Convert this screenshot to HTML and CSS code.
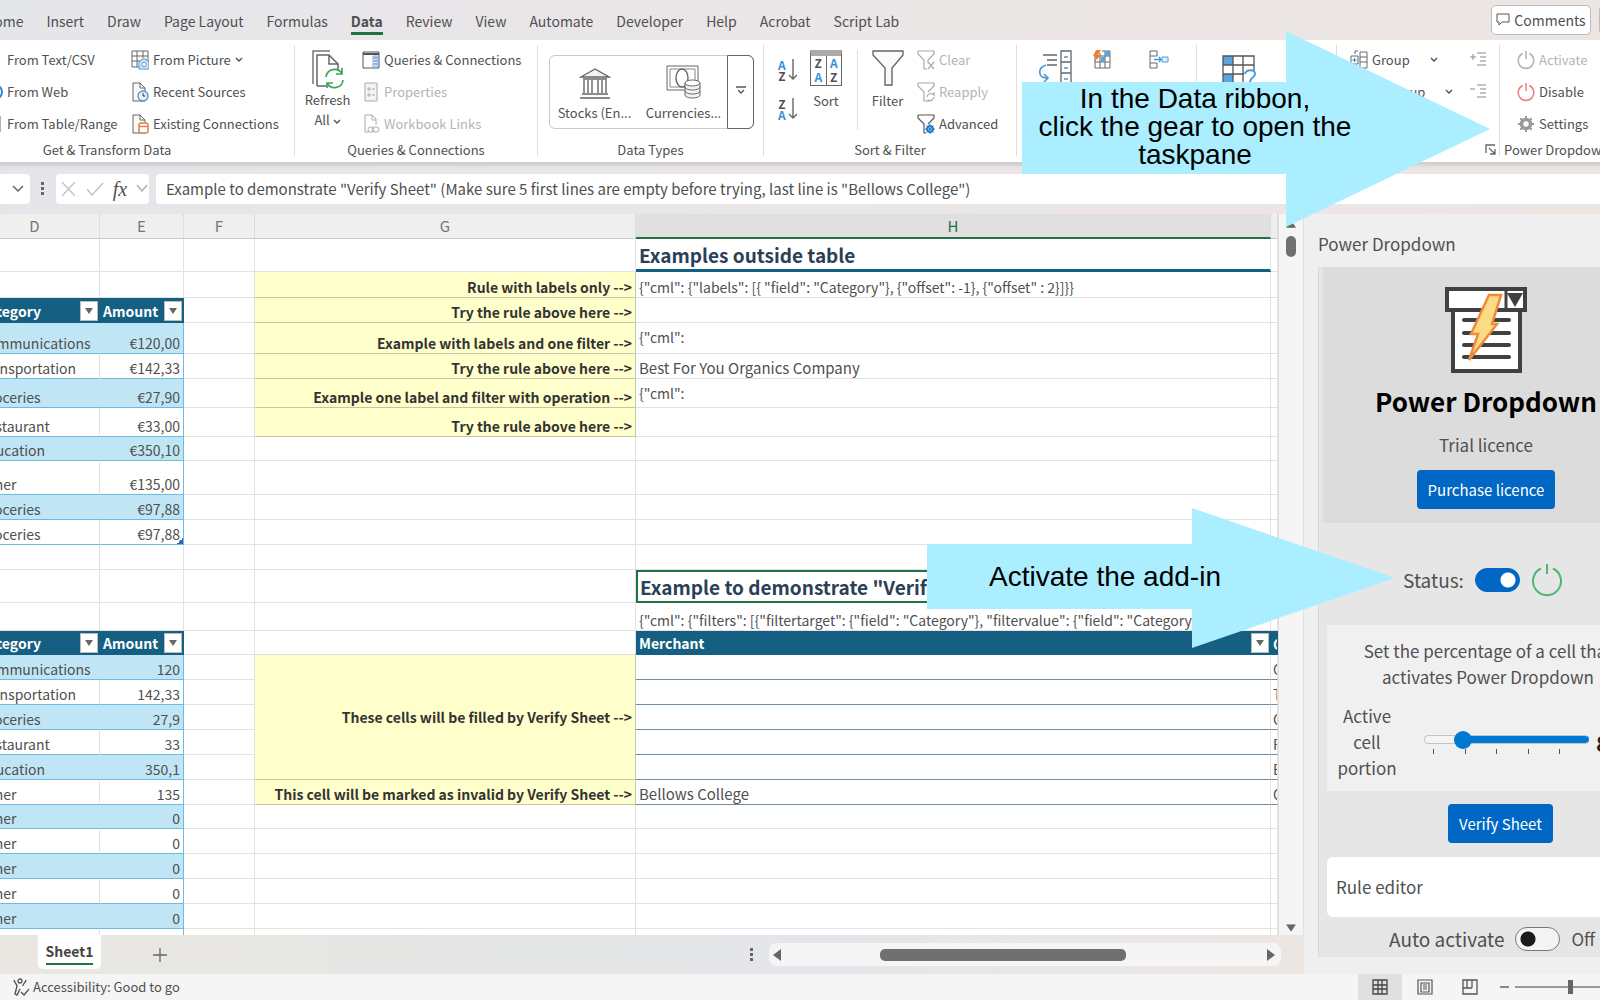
FILE: index.html
```html
<!DOCTYPE html>
<html lang="en">
<head>
<meta charset="utf-8">
<title>Power Dropdown – Workbook</title>
<link rel="stylesheet" href="styles.css">
</head>
<body>
<svg class="defs" aria-hidden="true">
  <symbol id="doc" viewBox="0 0 18 20"><path d="M2 1h7l5 5v13H2z" fill="#fafafa" stroke="#666"/><path d="M9 1v5h5" fill="none" stroke="#666"/></symbol>
  <symbol id="chev" viewBox="0 0 8 6"><path d="M1 1l3 3 3-3" fill="none" stroke="currentColor" stroke-width="1.4"/></symbol>
  <symbol id="funnel" viewBox="0 0 32 36"><path d="M1 1h30v4L20 18v17h-7V18L1 5z" fill="#fafafa" stroke="#666" stroke-width="1.4"/></symbol>
  <symbol id="power" viewBox="0 0 16 18"><path d="M5 3.2a7 7 0 1 0 6 0M8 1v7" fill="none" stroke="currentColor" stroke-width="1.4"/></symbol>
  <symbol id="tri" viewBox="0 0 8 6"><path d="M0 0h8L4 6z" fill="#666"/></symbol>
</svg>

<header class="tabs">
  <nav class="tablist">
    <a href="#">Home</a><a href="#">Insert</a><a href="#">Draw</a><a href="#">Page Layout</a><a href="#">Formulas</a><a href="#" class="current">Data</a><a href="#">Review</a><a href="#">View</a><a href="#">Automate</a><a href="#">Developer</a><a href="#">Help</a><a href="#">Acrobat</a><a href="#">Script Lab</a>
  </nav>
  <button class="comments"><svg width="14" height="14" viewBox="0 0 14 14"><path d="M1 1h12v8H6l-3 3V9H1z" fill="none" stroke="#555"/></svg>Comments</button>
  <button class="share" aria-label="Share"></button>
</header>

<section class="ribbon">
  <div class="group g-get">
    <div class="tools">
      <div class="stack clipped">
        <button><svg class="ic"><use href="#doc"/></svg>From Text/CSV</button>
        <button><svg class="ic" viewBox="0 0 18 20"><circle cx="10" cy="10" r="7" fill="#fff" stroke="#2b88d8" stroke-width="2"/></svg>From Web</button>
        <button><svg class="ic" viewBox="0 0 18 20"><path d="M2 2h13v16H2zM2 7h13M8 2v16" fill="none" stroke="#666"/></svg>From Table/Range</button>
      </div>
      <div class="stack">
        <button><svg class="ic" viewBox="0 0 18 20"><path d="M1 1h16v16H1zM1 6h16M1 11h8M6 1v16M12 1v7" fill="none" stroke="#666"/><path d="M8 11h2l1-2h4l1 2h2v8H8z" fill="#cfe6f8" stroke="#4a9bdc"/><circle cx="13" cy="14.500" r="2.200" fill="#fff" stroke="#4a9bdc"/></svg>From Picture<svg class="chev"><use href="#chev"/></svg></button>
        <button><svg class="ic" viewBox="0 0 18 20"><use href="#doc" width="18" height="20"/><circle cx="12" cy="14" r="5" fill="#eaf4fc" stroke="#4a9bdc" stroke-width="1.400"/><path d="M12 11v3h2.500" fill="none" stroke="#333"/></svg>Recent Sources</button>
        <button><svg class="ic" viewBox="0 0 18 20"><use href="#doc" width="18" height="20"/><rect x="8" y="9" width="9" height="10" rx="2" fill="#fff" stroke="#e08050" stroke-width="1.500"/><path d="M8 12.500h9" stroke="#e08050" stroke-width="1.500"/></svg>Existing Connections</button>
      </div>
    </div>
    <div class="glabel">Get &amp; Transform Data</div>
  </div>

  <div class="group g-query">
    <div class="tools">
      <button class="big"><svg width="32" height="40" viewBox="0 0 32 40"><path d="M1 34V1h17" fill="none" stroke="#777" stroke-width="1.500"/><path d="M5 36V5h12l9 9v6M17 5v9h9M5 36h9" fill="none" stroke="#666" stroke-width="1.500"/><path d="M14 27a8.500 8.500 0 0 1 16-3M30 18v6h-6M31 30a8.500 8.500 0 0 1-16 3M15 38v-5h6" fill="none" stroke="#3fa45b" stroke-width="1.700"/></svg><span>Refresh</span><span>All <svg class="chev"><use href="#chev"/></svg></span></button>
      <div class="stack">
        <button><svg class="ic" viewBox="0 0 18 20"><path d="M1 2h16v16H1z" fill="#fff" stroke="#555"/><path d="M1 4h16" stroke="#555" stroke-width="2"/><path d="M11 6h5v11h-5z" fill="#dbe9fb" stroke="#7aa5e0"/><path d="M12 8h3M12 11h3M12 14h3" stroke="#4472c4"/></svg>Queries &amp; Connections</button>
        <button disabled><svg class="ic" viewBox="0 0 18 20"><path d="M3 1h12v18H3z" fill="#f4f4f4" stroke="#aaa"/><path d="M6 6h2v2H6zM6 12h2v2H6zM10 7h3M10 13h3" fill="none" stroke="#aaa"/></svg>Properties</button>
        <button disabled><svg class="ic" viewBox="0 0 18 20"><path d="M3 18V1h7l4 4v6M10 1v5h4M3 18h4" fill="none" stroke="#aaa"/><rect x="6" y="13" width="6" height="5" rx="2.500" fill="none" stroke="#aaa"/><rect x="10" y="13" width="7" height="5" rx="2.500" fill="none" stroke="#aaa"/></svg>Workbook Links</button>
      </div>
    </div>
    <div class="glabel">Queries &amp; Connections</div>
  </div>

  <div class="group g-types">
    <div class="gallery">
      <button><svg width="32" height="32" viewBox="0 0 32 32"><path d="M2 10L16 2l14 8zM4 12h24M5 13v13M9 13v13M13 13v13M19 13v13M23 13v13M27 13v13M3 27h26M1 31h30" fill="#f4f4f4" stroke="#666" stroke-width="1.400"/></svg>Stocks (En...</button>
      <button><svg width="36" height="34" viewBox="0 0 36 34"><path d="M1 1h31v24H1z" fill="#fff" stroke="#666"/><path d="M4 4h25v18H4z" fill="none" stroke="#888"/><ellipse cx="16" cy="13" rx="6" ry="9" fill="#fff" stroke="#666" stroke-width="1.400"/><path d="M19 18v12c0 4 15 4 15 0V18" fill="#f4f4f4" stroke="#666"/><ellipse cx="26.500" cy="18" rx="7.500" ry="3" fill="#fff" stroke="#666"/><path d="M19 22c0 4 15 4 15 0M19 26c0 4 15 4 15 0" fill="none" stroke="#666"/></svg>Currencies...</button>
      <button class="more" aria-label="More"><svg width="10" height="8" viewBox="0 0 10 8"><path d="M0 1h10M2 4l3 3 3-3" fill="none" stroke="#555" stroke-width="1.300"/></svg></button>
    </div>
    <div class="glabel">Data Types</div>
  </div>

  <div class="group g-sort">
    <div class="tools">
      <div class="az">
        <button aria-label="Sort A to Z"><b>A<br><i>Z</i></b><svg width="9" height="22" viewBox="0 0 9 22"><path d="M5 0v19M1 16l4 4 4-4" fill="none" stroke="#666" stroke-width="1.400"/></svg></button>
        <button aria-label="Sort Z to A"><b><i>Z</i><br>A</b><svg width="9" height="22" viewBox="0 0 9 22"><path d="M5 0v19M1 16l4 4 4-4" fill="none" stroke="#666" stroke-width="1.400"/></svg></button>
      </div>
      <button class="big sort"><span class="sortbox"><b><i>Z</i><br>A</b><b>A<br><i>Z</i></b></span><span>Sort</span></button>
      <button class="big filter-big"><svg width="32" height="36"><use href="#funnel"/></svg><span>Filter</span></button>
      <div class="stack">
        <button disabled><svg class="ic" viewBox="0 0 18 20"><path d="M1 1h16v3l-6 6v3M1 1v3l6 6v9h3M11 12l6 7M17 12l-6 7" fill="none" stroke="#aaa" stroke-width="1.200"/></svg>Clear</button>
        <button disabled><svg class="ic" viewBox="0 0 18 20"><path d="M1 1h16v3l-6 6M1 1v3l6 6v9h3M10 15a4 4 0 0 1 7-2v-3M17 15a4 4 0 0 1-6 3v2" fill="none" stroke="#aaa" stroke-width="1.200"/></svg>Reapply</button>
        <button><svg class="ic" viewBox="0 0 18 20"><path d="M1 1h16v3l-6 6M1 1v3l6 6v9h2" fill="none" stroke="#555" stroke-width="1.200"/><circle cx="13" cy="15" r="3" fill="none" stroke="#2b7cd3" stroke-width="2"/><path d="M13 10v10M8 15h10M9.500 11.500l7 7M16.500 11.500l-7 7" stroke="#2b7cd3"/></svg>Advanced</button>
      </div>
    </div>
    <div class="glabel">Sort &amp; Filter</div>
  </div>

  <div class="group g-tools">
    <div class="tools">
      <button aria-label="Text to Columns"><svg width="36" height="36" viewBox="0 0 36 36"><path d="M6 5h14M10 10h10M10 15h10" stroke="#666" stroke-width="1.600"/><path d="M9 15c-9 3-8 13 1 13M7 24l4 4-4 4" fill="none" stroke="#4a9bdc" stroke-width="1.700"/><path d="M24 1h10v34H24zM24 12h10M24 23h10" fill="#fff" stroke="#666" stroke-width="1.300"/><path d="M27 7h4M27 18h4M27 29h4" stroke="#4a9bdc" stroke-width="1.500"/></svg></button>
      <button aria-label="Flash Fill"><svg width="20" height="20" viewBox="0 0 20 20"><path d="M3 6h15v12H3zM3 12h15M8 3v15M13 1v17M10 1h8v5" fill="#fff" stroke="#666"/><path d="M9 7h4v5H9zM13 1h5v5h-5z" fill="#5aa5e0"/><path d="M4 0h5L6 5h3L2 12l2-6H1z" fill="#ed7d31"/></svg></button>
      <button aria-label="Consolidate"><svg width="20" height="20" viewBox="0 0 20 20"><path d="M1 1h7v5H1zM1 13h7v5H1zM1 6v7" fill="#fff" stroke="#666"/><path d="M5 9.500h7M10 7l2 2.500L10 12" fill="none" stroke="#4a9bdc" stroke-width="1.400"/><path d="M13 7h6v5h-6z" fill="#e4f0fa" stroke="#4a9bdc"/></svg></button>
    </div>
  </div>

  <div class="group g-what">
    <div class="tools">
      <button aria-label="What-If Analysis"><svg width="34" height="32" viewBox="0 0 34 32"><path d="M1 1h31v27H1z" fill="#fff"/><path d="M1 1h10v9H1zM1 19h10v9H1z" fill="#5aa5e0"/><path d="M1 1h31v27H1zM1 10h31M1 19h31M11 1v27M21 1v27" fill="none" stroke="#555" stroke-width="1.300"/><path d="M22 16h12v16H22z" fill="#fff"/><path d="M23 19c1-5 10-5 10 0 0 4-5 3-5 8" fill="none" stroke="#4a9bdc" stroke-width="2"/></svg></button>
    </div>
  </div>

  <div class="group g-outline">
    <div class="tools">
      <div class="stack">
        <button><svg class="ic" viewBox="0 0 18 20"><path d="M10 2h7v16h-7zM10 7h7M10 12h7" fill="#fff" stroke="#666"/><path d="M8 1H5v3M1 6h7v8H1z" fill="none" stroke="#666"/><path d="M2.500 10h4M4.500 8v4" stroke="#2b7cd3"/></svg>Group<svg class="chev far"><use href="#chev"/></svg></button>
        <button><svg class="ic" viewBox="0 0 18 20"><path d="M10 2h7v16h-7z" fill="#fff" stroke="#666"/></svg>Ungroup<svg class="chev far"><use href="#chev"/></svg></button>
      </div>
      <div class="stack detail">
        <button aria-label="Show Detail" disabled><svg class="ic" viewBox="0 0 18 20"><path d="M1 7h6M4 4v6M8 3h9M11 7h6M11 11h6M8 15h9" stroke="#888"/></svg></button>
        <button aria-label="Hide Detail" disabled><svg class="ic" viewBox="0 0 18 20"><path d="M1 7h5M8 3h9M11 7h6M11 11h6M8 15h9" stroke="#888"/></svg></button>
      </div>
    </div>
    <button class="launcher" aria-label="Outline settings"><svg width="12" height="12" viewBox="0 0 12 12"><path d="M1 9V1h9M4 4l6 6M10 5v5H5" fill="none" stroke="#666" stroke-width="1.300"/></svg></button>
  </div>

  <div class="group g-power">
    <div class="tools">
      <div class="stack">
        <button disabled><svg class="ic"><use href="#power"/></svg>Activate</button>
        <button><svg class="ic red"><use href="#power"/></svg>Disable</button>
        <button><svg class="ic" viewBox="0 0 18 18"><circle cx="9" cy="9" r="4.500" fill="none" stroke="#999" stroke-width="3.500"/><path d="M9 1v3M9 14v3M1 9h3M14 9h3M3.300 3.300l2 2M12.700 12.700l2 2M3.300 14.700l2-2M12.700 5.300l2-2" stroke="#999" stroke-width="2"/></svg>Settings</button>
      </div>
    </div>
    <div class="glabel">Power Dropdown</div>
  </div>
</section>

<section class="formula-bar">
  <button class="namebox" aria-label="Name box"><svg width="14" height="10" viewBox="0 0 14 10"><path d="M2 2l5 5 5-5" fill="none" stroke="#666" stroke-width="1.500"/></svg></button>
  <svg class="grip" width="4" height="14" viewBox="0 0 4 14"><path d="M0 0h3v3H0zM0 5h3v3H0zM0 10h3v3H0z" fill="#666"/></svg>
  <div class="fx">
    <svg width="16" height="16" viewBox="0 0 16 16"><path d="M1 1l13 14M14 1L1 15" stroke="#c4c4c4" stroke-width="1.300"/></svg>
    <svg width="18" height="14" viewBox="0 0 18 14"><path d="M1 7l5 6L17 1" fill="none" stroke="#c4c4c4" stroke-width="1.500"/></svg>
    <i>fx</i>
    <svg width="12" height="9" viewBox="0 0 12 9"><path d="M1 1l5 6 5-6" fill="none" stroke="#aaa" stroke-width="1.300"/></svg>
  </div>
  <input class="formula" aria-label="Formula" value="Example to demonstrate &quot;Verify Sheet&quot; (Make sure 5 first lines are empty before trying, last line is &quot;Bellows College&quot;)">
</section>

<main>
  <div class="book">
    <div class="viewport">
      <div class="sheet">
        <table>
          <colgroup><col class="cd"><col class="ce"><col class="cf"><col class="cg"><col><col class="ci"></colgroup>
          <thead><tr><th>D</th><th>E</th><th>F</th><th>G</th><th class="sel">H</th><th></th></tr></thead>
          <tbody>
            <tr class="r33"><td></td><td></td><td></td><td></td><td class="title ruled">Examples outside table</td><td></td></tr>
            <tr class="r26"><td></td><td></td><td></td><td class="note">Rule with labels only --&gt;</td><td>{"cml": {"labels": [{ "field": "Category"}, {"offset": -1}, {"offset" : 2}]}}</td><td></td></tr>
            <tr class="r25"><td class="h"><div>Category<button aria-label="Filter"><svg width="8" height="6"><use href="#tri"/></svg></button></div></td><td class="h last"><div>Amount<button aria-label="Filter"><svg width="8" height="6"><use href="#tri"/></svg></button></div></td><td></td><td class="note">Try the rule above here --&gt;</td><td></td><td></td></tr>
            <tr class="r31"><td class="t s">Communications</td><td class="t s n">€120,00</td><td></td><td class="note">Example with labels and one filter --&gt;</td><td class="top">{"cml":</td><td></td></tr>
            <tr class="r25"><td class="t">Transportation</td><td class="t n">€142,33</td><td></td><td class="note">Try the rule above here --&gt;</td><td class="company">Best For You Organics Company</td><td></td></tr>
            <tr class="r29"><td class="t s">Groceries</td><td class="t s n">€27,90</td><td></td><td class="note">Example one label and filter with operation --&gt;</td><td class="top">{"cml":</td><td></td></tr>
            <tr class="r29"><td class="t">Restaurant</td><td class="t n">€33,00</td><td></td><td class="note">Try the rule above here --&gt;</td><td></td><td></td></tr>
            <tr class="r24"><td class="t s">Education</td><td class="t s n">€350,10</td><td></td><td></td><td></td><td></td></tr>
            <tr class="r34"><td class="t">Other</td><td class="t n">€135,00</td><td></td><td></td><td></td><td></td></tr>
            <tr class="r25"><td class="t s">Groceries</td><td class="t s n">€97,88</td><td></td><td></td><td></td><td></td></tr>
            <tr class="r25"><td class="t">Groceries</td><td class="t n corner">€97,88</td><td></td><td></td><td></td><td></td></tr>
            <tr class="r25"><td></td><td></td><td></td><td></td><td></td><td></td></tr>
            <tr class="r33"><td></td><td></td><td></td><td></td><td class="title active">Example to demonstrate "Verify Sheet"</td><td></td></tr>
            <tr class="r28"><td></td><td></td><td></td><td></td><td>{"cml": {"filters": [{"filtertarget": {"field": "Category"}, "filtervalue": {"field": "Category2"}}]}}</td><td></td></tr>
            <tr class="r24"><td class="h"><div>Category<button aria-label="Filter"><svg width="8" height="6"><use href="#tri"/></svg></button></div></td><td class="h last"><div>Amount<button aria-label="Filter"><svg width="8" height="6"><use href="#tri"/></svg></button></div></td><td></td><td></td><td class="h"><div>Merchant<button aria-label="Filter"><svg width="8" height="6"><use href="#tri"/></svg></button></div></td><td class="h">Category</td></tr>
            <tr class="r25"><td class="t s">Communications</td><td class="t s n">120</td><td></td><td class="note mid" rowspan="5">These cells will be filled by Verify Sheet --&gt;</td><td class="m"></td><td class="m">Communications</td></tr>
            <tr class="r25"><td class="t">Transportation</td><td class="t n">142,33</td><td></td><td class="m"></td><td class="m">Transportation</td></tr>
            <tr class="r25"><td class="t s">Groceries</td><td class="t s n">27,9</td><td></td><td class="m"></td><td class="m">Groceries</td></tr>
            <tr class="r25"><td class="t">Restaurant</td><td class="t n">33</td><td></td><td class="m"></td><td class="m">Restaurant</td></tr>
            <tr class="r25"><td class="t s">Education</td><td class="t s n">350,1</td><td></td><td class="m"></td><td class="m">Education</td></tr>
            <tr class="r25"><td class="t">Other</td><td class="t n">135</td><td></td><td class="note">This cell will be marked as invalid by Verify Sheet --&gt;</td><td class="m company">Bellows College</td><td class="m">Other</td></tr>
            <tr class="r24"><td class="t s">Other</td><td class="t s n">0</td><td></td><td></td><td></td><td></td></tr>
            <tr class="r25"><td class="t">Other</td><td class="t n">0</td><td></td><td></td><td></td><td></td></tr>
            <tr class="r25"><td class="t s">Other</td><td class="t s n">0</td><td></td><td></td><td></td><td></td></tr>
            <tr class="r25"><td class="t">Other</td><td class="t n">0</td><td></td><td></td><td></td><td></td></tr>
            <tr class="r25"><td class="t s">Other</td><td class="t s n">0</td><td></td><td></td><td></td><td></td></tr>
            <tr class="r25"><td class="t"></td><td class="t n"></td><td></td><td></td><td></td><td></td></tr>
          </tbody>
        </table>
      </div>
      <div class="vscroll"><svg width="10" height="8"><use href="#tri" transform="rotate(180 5 4)"/></svg><span class="vthumb"></span><svg width="10" height="9" viewBox="0 0 8 7"><use href="#tri" width="8" height="6"/></svg></div>
    </div>
    <footer class="sheetbar">
      <button class="sheettab"><span>Sheet1</span></button>
      <button class="add" aria-label="New sheet"><svg width="14" height="14" viewBox="0 0 14 14"><path d="M7 0v14M0 7h14" stroke="#666" stroke-width="1.300"/></svg></button>
      <svg class="dots" width="3" height="14" viewBox="0 0 3 14"><path d="M0 0h3v3H0zM0 5h3v3H0zM0 10h3v3H0z" fill="#666"/></svg>
      <div class="hscroll"><svg width="8" height="12" viewBox="0 0 8 12"><path d="M8 0v12L0 6z" fill="#666"/></svg><span class="hthumb"></span><svg width="8" height="12" viewBox="0 0 8 12"><path d="M0 0v12l8-6z" fill="#666"/></svg></div>
    </footer>
  </div>

  <aside class="pane">
    <h2>Power Dropdown</h2>
    <div class="frame">
      <section class="hero">
        <svg width="82" height="86" viewBox="0 0 82 86"><path d="M8 23h67v61H8z" fill="#fff" stroke="#404040" stroke-width="4"/><path d="M2 2h78v21H2z" fill="#fff" stroke="#404040" stroke-width="4"/><path d="M61 2v21" stroke="#404040" stroke-width="3"/><path d="M62 6h16L70 20z" fill="#404040"/><path d="M19 33h45M19 46h45M19 58h45M19 70h45" stroke="#404040" stroke-width="4" stroke-linecap="round"/><path d="M44 8h12l-9 29h5L24 73l9-26h-7z" fill="#fbdc84" stroke="#ed8b3b" stroke-width="2.500"/></svg>
        <h1>Power Dropdown</h1>
        <p>Trial licence</p>
        <button class="primary">Purchase licence</button>
      </section>
      <div class="status"><label for="status">Status:</label><input type="checkbox" role="switch" id="status" class="switch" checked><svg width="32" height="34" viewBox="0 0 32 34"><path d="M10 5.500a14 14 0 1 0 12 0M16 1v10" fill="none" stroke="#4cb86e" stroke-width="2"/></svg></div>
      <section class="portion">
        <p>Set the percentage of a cell that<br>activates Power Dropdown</p>
        <div class="sliderrow">
          <label for="portion">Active<br>cell<br>portion</label>
          <div class="slider"><input type="range" id="portion" min="0" max="100" value="80"><div class="ticks"><i></i><i></i><i></i><i></i><i></i></div></div>
          <output for="portion">80</output>
        </div>
      </section>
      <button class="primary verify">Verify Sheet</button>
      <button class="editor">Rule editor</button>
      <div class="auto"><label for="auto">Auto activate</label><input type="checkbox" role="switch" id="auto" class="switch"><span>Off</span></div>
    </div>
  </aside>
</main>

<footer class="statusbar">
  <svg width="16" height="18" viewBox="0 0 16 18"><circle cx="7" cy="3" r="2" fill="none" stroke="#555" stroke-width="1.300"/><path d="M1 2c1 4 3 4 3 6l-2 8 2 1 3-6M13 2c-1 4-3 3-3 6M8 14l3 3 5-6" fill="none" stroke="#555" stroke-width="1.400"/></svg>
  <span class="grow">Accessibility: Good to go</span>
  <button class="view on" aria-label="Normal view"><svg width="16" height="16" viewBox="0 0 16 16"><path d="M1 1h14v14H1zM1 6h14M1 10h14M6 1v14M10 1v14" fill="none" stroke="#444" stroke-width="1.300"/></svg></button>
  <button class="view" aria-label="Page layout"><svg width="16" height="16" viewBox="0 0 16 16"><path d="M1 1h14v14H1zM4 4h8v9H4zM6 6h4M6 8h4M6 10h4" fill="none" stroke="#555" stroke-width="1.200"/></svg></button>
  <button class="view" aria-label="Page break preview"><svg width="16" height="16" viewBox="0 0 16 16"><path d="M1 1h14v14H1zM5 1v8M10 1v8M1 9h9" fill="none" stroke="#555" stroke-width="1.300"/></svg></button>
  <div class="zoomctl"><svg width="9" height="2"><path d="M0 1h9" stroke="#888" stroke-width="2"/></svg><span class="zoomline"><span></span></span></div>
</footer>

<div class="arrow a1"><svg viewBox="0 0 468 196"><path d="M0 51h264V0l204 98-204 98v-53H0z" fill="#aaeeff"/></svg><p>In the Data ribbon,<br>click the gear to open the<br>taskpane</p></div>
<div class="arrow a2"><svg viewBox="0 0 468 140"><path d="M0 36h265V0l203 70-203 70v-39H0z" fill="#aaeeff"/></svg><p>Activate the add-in</p></div>
</body>
</html>
```
FILE: styles.css
```css
* { box-sizing: border-box; }
body {
  margin: 0; height: 100vh; overflow: hidden; display: flex; flex-direction: column;
  font: 14px/20px "Noto Sans CJK SC", "Open Sans", sans-serif; color: #505050; background: #efefef;
}
button { font: inherit; color: inherit; background: none; border: 0; padding: 0; margin: 0; display: flex; align-items: center; white-space: nowrap; }
button:disabled { color: #b4b4b4; }
svg { flex: none; }
p, h1, h2 { margin: 0; }
.defs { position: absolute; width: 0; height: 0; }

/* tab strip */
.tabs { height: 40px; flex: none; display: flex; align-items: center; background: linear-gradient(90deg, #e5e6ea, #ebe6e7 50%, #ece6e3); overflow: hidden; }
.tablist { flex: 1; display: flex; gap: 23px; margin-left: -16px; padding-top: 3px; }
.tablist a { color: #505050; text-decoration: none; white-space: nowrap; padding: 2px 0 1px; border-bottom: 3px solid transparent; }
.tablist .current { font-weight: 700; border-color: #217346; }
.comments { width: 100px; height: 30px; justify-content: center; gap: 4px; background: #fff; border: 1px solid #bbb; border-radius: 5px; margin-right: 8px; }
.share { width: 12px; height: 30px; margin-right: -11px; border: 1px solid #bbb; border-radius: 5px; background: #fff; }

/* ribbon */
.ribbon { height: 123px; flex: none; display: grid; grid-template-columns: 295px 243px 226px 253px 180px 140px 163px 1fr; background: #fff; padding: 5px 0 6px; border-bottom: 1px solid #d0d0d0; overflow: hidden; font-size: 13px; }
.group { display: flex; flex-direction: column; justify-content: space-between; border-right: 1px solid #dedede; white-space: nowrap; min-width: 0; }
.group:last-child { border-right: 0; }
.tools { display: flex; }
.stack { display: flex; flex-direction: column; gap: 12px; padding-top: 5px; }
.stack button { gap: 4px; height: 20px; }
.ic { width: 18px; height: 20px; }
.chev { width: 8px; height: 6px; }
.glabel { text-align: center; line-height: 12px; }
.clipped { width: 131px; margin-left: -15px; margin-right: 15px; }
.g-get .glabel { padding-right: 80px; }
.big { flex-direction: column; }
.g-query .big { width: 45px; margin: 5px 12px 0 10px; }
.gallery { display: flex; width: 205px; height: 74px; margin: 10px 0 0 11px; border: 1px solid #ccc; border-radius: 6px; }
.gallery button { flex: 1; flex-direction: column; justify-content: flex-end; padding-bottom: 5px; gap: 4px; }
.gallery .more { flex: none; width: 27px; justify-content: center; border: 1px solid #666; border-radius: 0 6px 6px 0; margin: -1px; }
b { font-size: 12px; line-height: 11px; color: #3b8ed8; }
b i { font-style: normal; color: #505050; }
.az { display: flex; flex-direction: column; gap: 17px; padding: 14px 14px 0; width: 46px; }
.az button { gap: 2px; height: 22px; }
.sort { width: 32px; margin-top: 5px; gap: 5px; }
.sortbox { width: 32px; height: 36px; display: flex; border: 1px solid #666; border-top: 6px solid #aaa; }
.sortbox b { flex: 1; line-height: 14px; }
.sortbox b + b { border-left: 1px solid #666; }
.filter-big { width: 60px; margin: 5px 0 0 15px; gap: 5px; border-left: 1px solid #dedede; height: 80px; }
.g-tools .tools { padding: 5px 0 0 20px; align-items: flex-start; gap: 37px; }
.g-tools .tools button:first-child { margin-right: -18px; }
.g-what .tools { padding: 10px 0 0 25px; }
.g-outline .tools { padding-left: 13px; justify-content: space-between; padding-right: 12px; }
.far { margin-left: 16px; }
.launcher { align-self: flex-end; margin: 0 2px 0 0; }
.g-power .stack { padding-left: 17px; }
.g-power .glabel { text-align: left; padding-left: 4px; }
.red { color: #f08080; }

/* formula bar */
.formula-bar { height: 51px; flex: none; display: flex; align-items: center; background: linear-gradient(90deg, #e4e6ea, #ebe6e7 50%, #ece6e3); box-shadow: inset 0 4px 5px -3px #bbb; overflow: hidden; }
.namebox { width: 30px; height: 30px; background: #fff; border-radius: 0 4px 4px 0; padding-left: 11px; }
.grip { margin: 0 11px; }
.fx { width: 93px; height: 30px; display: flex; align-items: center; justify-content: space-between; padding: 0 1px 0 5px; background: #fff; border-radius: 4px; margin-right: 7px; }
.fx i { font: italic 20px/24px "Liberation Serif", serif; }
.formula { flex: 1; min-width: 0; height: 30px; border: 0; border-radius: 4px 0 0 4px; padding: 0 10px; font: inherit; font-size: 15px; color: #505050; background: #fff; }

/* sheet */
main { flex: 1; min-height: 0; display: flex; }
.book { flex: 1; min-width: 0; display: flex; flex-direction: column; }
.viewport { flex: 1; min-height: 0; display: flex; }
.sheet { flex: 1; min-width: 0; overflow: hidden; background: #fff; }
table { table-layout: fixed; border-collapse: separate; border-spacing: 0; width: calc(100% + 24px); margin-left: -24px; }
.cd { width: 124px; } .ce { width: 84px; } .cf { width: 71px; } .cg { width: 381px; } .ci { width: 7px; }
thead th { height: 25px; padding: 0; background: #efefef; font-size: 15px; font-weight: 400; color: #777; border-right: 1px solid #dcdcdc; border-bottom: 1px solid #c8c8c8; }
thead th:first-child { padding-right: 6px; }
thead .sel { background: #e0e0e0; color: #217346; border-bottom: 2px solid #217346; }
td { padding: 0 3px; vertical-align: bottom; border-right: 1px solid #e2e2e2; border-bottom: 1px solid #e2e2e2; white-space: nowrap; overflow: hidden; }
td.company { font-size: 15px; }
td.top { vertical-align: top; padding-top: 4px; }
.r24 { height: 24px; } .r25 { height: 25px; } .r26 { height: 26px; } .r28 { height: 28px; } .r29 { height: 29px; }
.r31 { height: 31px; } .r33 { height: 33px; } .r34 { height: 34px; }
td.note { background: #ffffcc; color: #333; font-weight: 700; text-align: right; border-color: #c4c4a8; }
td.mid { vertical-align: middle; }
td.title { font-size: 19px; line-height: 28px; font-weight: 700; color: #2a4057; }
td.ruled { border-bottom: 3px solid #156082; }
td.active { border: 2px solid #217346; padding: 0 2px; }
td.t { border-bottom-color: #6ebbe2; }
td.s { background: #c0e6f5; border-right-color: #c0e6f5; }
td.n { text-align: right; border-right-color: #6ebbe2; }
td.corner { background: linear-gradient(135deg, transparent 50%, #3a62b8 50%) right bottom / 6px 6px no-repeat; }
td.h { background: #156082; color: #fff; font-weight: 700; border-color: #156082; }
td.h div { display: flex; justify-content: space-between; align-items: center; height: 23px; margin-right: -2px; }
td.h button { width: 18px; height: 20px; justify-content: center; background: #fff; border: 1px solid #bbb; }
td.m { border-bottom-color: #6d8ca4; }
td:last-child { padding: 0 0 0 2px; text-overflow: clip; }

.vscroll { width: 26px; padding: 6px 0 2px; display: flex; flex-direction: column; align-items: center; background: #f5f5f5; border-left: 1px solid #e0e0e0; border-right: 1px solid #e0e0e0; }
.vthumb { width: 10px; height: 21px; margin: 8px 0 auto; border-radius: 5px; background: #707070; }
.sheetbar { height: 39px; flex: none; display: flex; align-items: center; background: linear-gradient(90deg, #eae7e2, #e4e6e5 40%, #e4e6ea 60%, #ece6e3); padding-right: 23px; }
.sheettab { align-self: flex-start; width: 63px; height: 34px; margin-left: 38px; justify-content: center; background: #fff; border-radius: 0 0 5px 5px; font-weight: 700; color: #444; }
.sheettab span { border-bottom: 2px solid #217346; line-height: 24px; }
.add { margin-left: 52px; }
.dots { margin: 0 16px 0 auto; }
.hscroll { width: 40%; height: 23px; display: flex; align-items: center; justify-content: space-between; background: #f5f5f5; border-radius: 8px; padding: 0 6px 0 4px; }
.hthumb { width: 49%; height: 12px; border-radius: 5px; background: #707070; margin-right: 42px; }

/* task pane */
.pane { width: 296px; flex: none; overflow: hidden; padding: 16px 0 17px 14px; background: #efefef; display: flex; flex-direction: column; font-size: 17px; line-height: 26px; }
.pane h2 { font-size: 17px; line-height: 28px; font-weight: 400; padding-bottom: 9px; }
.frame { flex: 1; width: 340px; padding: 0 9px 0 8px; background: #e6e6e6; border-left: 1px solid #d8d8d8; display: flex; flex-direction: column; align-items: center; }
.hero { width: 326px; height: 256px; margin-left: -4px; display: flex; flex-direction: column; align-items: center; background: #dcdcdc; padding-top: 20px; }
.hero h1 { font-size: 26px; line-height: 36px; margin-top: 10px; color: #000; }
.hero p { margin: 13px 0 12px; }
.primary { height: 39px; padding: 0 11px; border-radius: 4px; background: #0067c5; color: #fff; font-size: 15px; }
.status { height: 102px; padding-top: 12px; display: flex; align-items: center; gap: 11px; font-size: 19px; margin-right: 10px; }
.switch { appearance: none; margin: 0; width: 45px; height: 24px; border-radius: 12px; border: 1px solid #777; background: radial-gradient(circle at 12px 11px, #1b1b1b 7px, transparent 8px) #f4f4f4; }
.switch:checked { border-color: #0067c5; background: radial-gradient(circle at 32px 11px, #fff 7px, transparent 8px) #0067c5; }
.portion { width: 100%; height: 166px; margin-bottom: 13px; background: #f0f0f0; padding: 13px 0 0; text-align: center; }
.sliderrow { display: flex; align-items: center; margin-top: 13px; }
.sliderrow label { width: 80px; }
.slider { width: 165px; margin-left: 17px; }
.slider input { appearance: none; display: block; width: 100%; height: 9px; margin: 5px 0; direction: rtl; border: 1px solid #c4c4c4; border-color: #c4c4c4 #0078d4 #c4c4c4 #c4c4c4; background: linear-gradient(90deg, #f4f4f4 25%, #0078d4 25%) border-box; border-radius: 5px; }
.slider input::-webkit-slider-thumb { appearance: none; width: 18px; height: 18px; border-radius: 50%; background: #0078d4; }
.ticks { display: flex; justify-content: space-between; padding: 0 29px 0 9px; height: 5px; }
.ticks i { width: 1px; background: #555; }
.sliderrow output { margin-left: 7px; font-weight: 700; font-size: 22px; color: #222; }
.verify { margin: 0 0 14px 25px; }
.editor { width: 100%; height: 60px; padding-left: 9px; background: #fff; border-radius: 6px; }
.auto { display: flex; align-items: center; gap: 11px; padding-top: 8px; margin-left: 8px; font-size: 19px; line-height: 28px; }
.auto span { font-size: 17px; }

/* status bar */
.statusbar { height: 26px; flex: none; display: flex; align-items: center; background: #f5f5f5; padding-left: 13px; gap: 4px; font-size: 13px; overflow: hidden; }
.grow { flex: 1; }
.view { width: 44px; height: 26px; justify-content: center; margin-right: -3px; }
.view.on { background: #e0e0e0; }
.zoomctl { display: flex; align-items: center; gap: 6px; width: 107px; padding-left: 7px; }
.zoomline { flex: 1; height: 2px; background: #999; display: flex; justify-content: center; align-items: center; padding-left: 26px; }
.zoomline span { width: 5px; height: 14px; background: #666; }

/* callouts over the window */
.arrow { position: absolute; width: 468px; }
.arrow svg { display: block; width: 100%; }
.arrow p { position: absolute; left: 0; font: 28px/28px "Liberation Sans", Arial, sans-serif; color: #000; text-align: center; white-space: nowrap; }
.a1 { right: 110px; top: 31px; }
.a1 p { top: 54px; width: 346px; }
.a2 { right: 205px; top: 508px; }
.a2 p { top: 55px; width: 356px; }
```
